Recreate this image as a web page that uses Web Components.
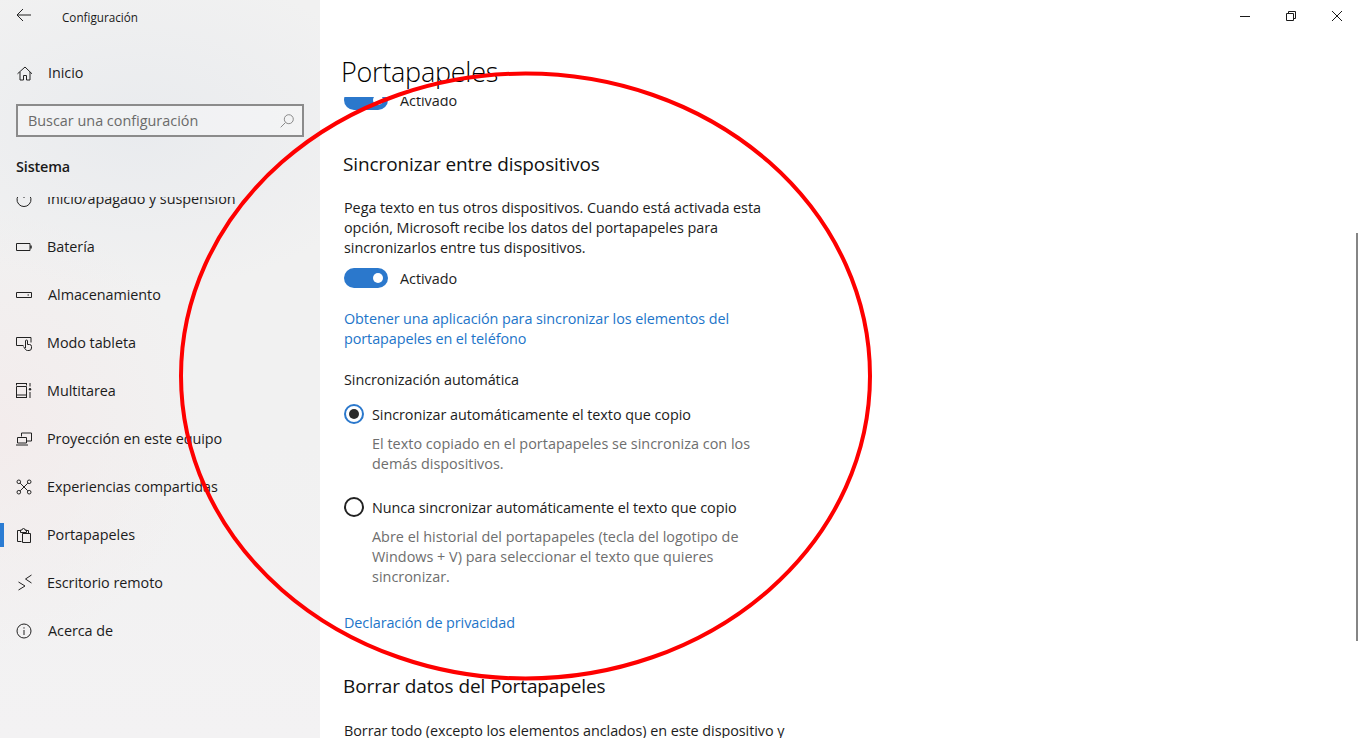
<!DOCTYPE html>
<html lang="es">
<head>
<meta charset="utf-8">
<title>Configuración</title>
<style>
    html, body { margin: 0; height: 100%; overflow: hidden; background: #fff; }
    body { font: 15px/20px "Open Sans", "Noto Sans", sans-serif; color: #1a1a1a; }
</style>
</head>
<body>

<template id="settings-window">
    <style>
        :host { display: flex; position: relative; width: 1360px; height: 738px; overflow: hidden; background: #fff; }
        .side { flex: 0 0 320px; }
        .main { flex: 1; min-width: 0; display: flex; flex-direction: column; }
        .thumb { position: absolute; left: 1356px; top: 233px; width: 2px; height: 408px; background: #858585; }
    </style>
    <div class="side"><slot name="side"></slot></div>
    <div class="main"><slot></slot></div>
    <div class="thumb"></div>
    <slot name="overlay"></slot>
</template>

<template id="side-nav">
    <style>
        :host {
            display: flex; flex-direction: column; height: 738px; box-sizing: border-box;
            background:
                radial-gradient(260px 160px at 140px 130px, #e9ebee 0%, rgba(233,235,238,0) 100%),
                radial-gradient(200px 220px at 0 430px, #f3ecec 0%, rgba(243,236,236,0) 100%),
                linear-gradient(180deg, #f1f1f1 0%, #f1f1f1 60%, #f3f2f3 100%);
        }
        .title { display: flex; align-items: center; height: 36px; padding-left: 16px; font-size: 11.7px; }
        .title svg { width: 16px; height: 16px; margin-top: -6px; margin-right: 30px; }
        .title span { margin-top: -2px; }
        svg { fill: none; stroke: #222; stroke-width: 1; }
        .head { font-weight: 600; font-size: 14.4px; padding-left: 16px; height: 20px; margin-top: 20px; letter-spacing: -.01em; }
        .home { margin-top: 13px; }
        .clip { flex: 1; margin-top: 20px; overflow: hidden; }
        .list { margin-top: -22px; }
    </style>
    <div class="title">
        <svg viewBox="0 0 16 16"><path d="M1 8h14M7 2 1 8l6 6"/></svg>
        <span>Configuración</span>
    </div>
    <div class="home"><slot name="home"></slot></div>
    <slot name="search"></slot>
    <div class="head">Sistema</div>
    <div class="clip"><div class="list"><slot></slot></div></div>
</template>

<template id="nav-item">
    <style>
        :host { display: flex; align-items: center; height: 48px; font-size: 14.4px; letter-spacing: -.05px; color: #1c1c1c; }
        :host([nudge]) svg { margin-right: 16px; }
        .bar { width: 4px; height: 24px; margin-right: 12px; }
        :host([selected]) .bar { background: #2b7cd3; }
        svg { width: 16px; height: 16px; flex: none; margin-right: 15px; fill: none; stroke: #222; stroke-width: 1; overflow: visible; }
    </style>
    <span class="bar"></span>
    <svg viewBox="0 0 16 16"></svg>
    <slot></slot>
</template>

<template id="search-box">
    <style>
        :host {
            display: flex; align-items: center; justify-content: space-between; box-sizing: border-box;
            width: 288px; height: 33px; margin: 7px 0 0 16px; padding: 0 8px 0 10px;
            border: 2px solid #8b8b8b; font-size: 14.4px; color: #6a6a6a;
            background: rgba(255,255,255,.3);
        }
        svg { width: 14px; height: 14px; fill: none; stroke: #8a8a8a; stroke-width: 1; }
    </style>
    <span><slot></slot></span>
    <svg viewBox="0 0 14 14"><circle cx="8.8" cy="5.2" r="4.5"/><path d="M5.5 8.5 .7 13.3"/></svg>
</template>

<template id="window-controls">
    <style>
        :host { display: flex; justify-content: flex-end; height: 32px; flex: none; }
        div { width: 46px; height: 32px; display: flex; align-items: center; justify-content: center; }
        svg { width: 10px; height: 10px; fill: none; stroke: #1a1a1a; stroke-width: 1; overflow: visible; }
    </style>
    <div><svg viewBox="0 0 10 10"><path d="M0 5.5h10"/></svg></div>
    <div><svg viewBox="0 0 10 10"><path d="M.5 2.5h7v7h-7zM2.5 2.5V.5h7v7h-2"/></svg></div>
    <div><svg viewBox="0 0 10 10"><path d="M0 0l10 10M10 0 0 10"/></svg></div>
</template>

<template id="page-title">
    <style>
        :host { display: block; flex: none; height: 65px; padding: 0 0 0 21px; font-size: 27px; line-height: 80px; font-weight: 300; color: #000; letter-spacing: -.01em; white-space: nowrap; }
    </style>
    <slot></slot>
</template>

<template id="scroll-pane">
    <style>
        :host { display: block; flex: 1; overflow: hidden; padding-left: 24px; white-space: nowrap; }
        .inner { margin-top: -7px; }
    </style>
    <div class="inner"><slot></slot></div>
</template>

<template id="section-title">
    <style>
        :host { display: block; font-size: 19px; line-height: 28px; color: #111; margin-left: -1px; letter-spacing: -.006em; }
    </style>
    <slot></slot>
</template>

<template id="body-text">
    <style>
        :host { display: block; font-size: 14.4px; line-height: 20px; letter-spacing: -.05px; color: #1c1c1c; }
        :host([muted]) { color: #6e6e6e; padding-left: 28px; letter-spacing: .02px; }
    </style>
    <slot></slot>
</template>

<template id="link-text">
    <style>
        :host { display: block; font-size: 14.4px; line-height: 20px; letter-spacing: -.08px; color: #1d75c9; }
    </style>
    <slot></slot>
</template>

<template id="toggle-switch">
    <style>
        :host { display: flex; align-items: center; height: 20px; font-size: 14.4px; letter-spacing: -.05px; color: #1c1c1c; }
        .track { display: flex; align-items: center; justify-content: flex-end; box-sizing: border-box; width: 44px; height: 20px; padding-right: 5px; margin-right: 12px; border-radius: 10px; background: #2b78cc; }
        .knob { width: 10px; height: 10px; border-radius: 50%; background: #fff; }
        .label { margin-top: 2px; }
    </style>
    <span class="track"><span class="knob"></span></span>
    <span class="label"><slot></slot></span>
</template>

<template id="radio-option">
    <style>
        :host { display: flex; align-items: center; height: 20px; font-size: 14.4px; letter-spacing: -.05px; color: #1c1c1c; }
        .ring { display: flex; align-items: center; justify-content: center; box-sizing: border-box; width: 20px; height: 20px; margin-right: 8px; border: 2px solid #222; border-radius: 50%; }
        :host([checked]) .ring { border-color: #2b78cc; }
        :host([checked]) .dot { width: 10px; height: 10px; border-radius: 50%; background: #2b2b2b; }
        .label { margin-top: 2px; }
    </style>
    <span class="ring"><span class="dot"></span></span>
    <span class="label"><slot></slot></span>
</template>

<template id="red-ellipse">
    <style>
        :host { position: absolute; left: 0; top: 0; width: 1360px; height: 738px; pointer-events: none; }
        svg { display: block; }
    </style>
    <svg width="1360" height="738" viewBox="0 0 1360 738">
        <ellipse cx="525.5" cy="376" rx="344.5" ry="302.5" fill="none" stroke="#fe0000" stroke-width="4"/>
    </svg>
</template>

<settings-window>
    <side-nav slot="side">
        <nav-item slot="home" icon="home" nudge>Inicio</nav-item>
        <search-box slot="search">Buscar una configuración</search-box>
        <nav-item icon="power">Inicio/apagado y suspensión</nav-item>
        <nav-item icon="battery">Batería</nav-item>
        <nav-item icon="storage" nudge>Almacenamiento</nav-item>
        <nav-item icon="tablet">Modo tableta</nav-item>
        <nav-item icon="multitask">Multitarea</nav-item>
        <nav-item icon="project">Proyección en este equipo</nav-item>
        <nav-item icon="shared">Experiencias compartidas</nav-item>
        <nav-item icon="clipboard" selected>Portapapeles</nav-item>
        <nav-item icon="remote">Escritorio remoto</nav-item>
        <nav-item icon="info" nudge>Acerca de</nav-item>
    </side-nav>

    <window-controls></window-controls>
    <page-title>Portapapeles</page-title>
    <scroll-pane>
        <toggle-switch>Activado</toggle-switch>
        <section-title style="margin-top:40px">Sincronizar entre dispositivos</section-title>
        <body-text style="margin-top:20px">Pega texto en tus otros dispositivos. Cuando está activada esta<br>opción, Microsoft recibe los datos del portapapeles para<br>sincronizarlos entre tus dispositivos.</body-text>
        <toggle-switch style="margin-top:10px">Activado</toggle-switch>
        <link-text style="margin-top:21px">Obtener una aplicación para sincronizar los elementos del<br>portapapeles en el teléfono</link-text>
        <body-text style="margin-top:21px">Sincronización automática</body-text>
        <radio-option checked style="margin-top:14px">Sincronizar automáticamente el texto que copio</radio-option>
        <body-text muted style="margin-top:10px">El texto copiado en el portapapeles se sincroniza con los<br>demás dispositivos.</body-text>
        <radio-option style="margin-top:23px">Nunca sincronizar automáticamente el texto que copio</radio-option>
        <body-text muted style="margin-top:10px">Abre el historial del portapapeles (tecla del logotipo de<br>Windows + V) para seleccionar el texto que quieres<br>sincronizar.</body-text>
        <link-text style="margin-top:26px">Declaración de privacidad</link-text>
        <section-title style="margin-top:39px">Borrar datos del Portapapeles</section-title>
        <body-text style="margin-top:21px">Borrar todo (excepto los elementos anclados) en este dispositivo y</body-text>
    </scroll-pane>

    <red-ellipse slot="overlay"></red-ellipse>
</settings-window>

<script type="text/javascript">
    const NAV_ICONS = {
        home: '<path d="M1.5 8.8 9 2l7 6.8M4 7v8h3.5v-4.5h3V15H14V7"/>',
        power: '<path d="M4 2.8a7 7 0 1 0 8 0M8 0v7"/>',
        battery: '<path d="M.5 4.5h13.5v7H.5z"/><path d="M15 6.5v3" stroke-width="1.5"/>',
        storage: '<path d="M.5 5.5h15v5H.5z"/><path d="M11.5 8h1.5"/>',
        tablet: '<path d="M7.5 10.5h-7v-8h14.5v5"/><path d="M9.500 13V6a1 1 0 0 1 2 0v3.500h2a2 2 0 0 1 2 2V13a2.500 2.500 0 0 1-2.500 2.500h-1.500a2.500 2.500 0 0 1-2.200-1.300L7.500 11.500"/>',
        multitask: '<path d="M0 .5h11M.5 .5v2M10.500 .5v2M.5 3.500h10v8.500H.5zM0 14.500h11M.5 12v3M10.500 12v3M14 0v3.500M14 9v6"/><circle cx="14" cy="6.200" r="1.200" fill="#222" stroke="none"/>',
        project: '<path d="M5.500 5.500v-3.500h10v8h-4.500"/><path d="M1.500 6.500h9v5.500h-9zM0 14h12"/>',
        shared: '<circle cx="2.800" cy="2.800" r="1.800"/><circle cx="13.200" cy="2.800" r="1.800"/><circle cx="2.800" cy="13.200" r="1.800"/><circle cx="13.200" cy="13.200" r="1.800"/><path d="M4.200 4.200l7.600 7.600M11.800 4.200l-7.600 7.600"/>',
        clipboard: '<path d="M5.500 14.500h-4v-11h3M9.500 3.500h3V6"/><path d="M6.500 6.500h8v9h-8zM4.500 5.500v-2.500h1.500a1.500 1.500 0 0 1 3 0h1.500v2.500z"/>',
        remote: '<path d="M2.500 7l6.500 4-6.500 4M15.500 0 9.500 4l6 4"/>',
        info: '<circle cx="8" cy="8" r="7"/><path d="M8 7v5M8 4.300v1.300"/>'
    };

    function shadowFrom(el, id) {
        const shadow = el.attachShadow({mode: 'open'});
        shadow.appendChild(document.getElementById(id).content.cloneNode(true));
        return shadow;
    }

    class NavItem extends HTMLElement {
        constructor() {
            super();
            const shadow = shadowFrom(this, 'nav-item');
            shadow.querySelector('svg').innerHTML = NAV_ICONS[this.getAttribute('icon')] || '';
        }
    }
    customElements.define('nav-item', NavItem);

    // the rest only clone their template
    ['settings-window', 'side-nav', 'search-box', 'window-controls', 'page-title', 'scroll-pane',
     'section-title', 'body-text', 'link-text', 'toggle-switch', 'radio-option', 'red-ellipse'].forEach(name => {
        customElements.define(name, class extends HTMLElement {
            constructor() {
                super();
                shadowFrom(this, name);
            }
        });
    });
</script>
</body>
</html>
